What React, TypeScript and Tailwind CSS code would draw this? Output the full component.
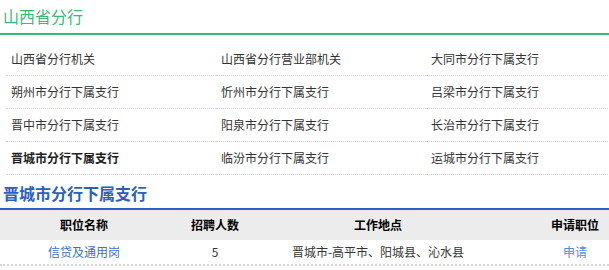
const branches = [
  "山西省分行机关",
  "山西省分行营业部机关",
  "大同市分行下属支行",
  "朔州市分行下属支行",
  "忻州市分行下属支行",
  "吕梁市分行下属支行",
  "晋中市分行下属支行",
  "阳泉市分行下属支行",
  "长治市分行下属支行",
  "晋城市分行下属支行",
  "临汾市分行下属支行",
  "运城市分行下属支行",
];

const active = "晋城市分行下属支行";

const cols = "grid grid-cols-[168px_94px_232px_162px] text-center";

const App = () => {
  return (
    <main className="w-[609px] h-[270px] overflow-hidden bg-white text-[12px] text-[#333] font-['Microsoft_YaHei','Noto_Sans_CJK_SC',sans-serif]">
      <div className="flex flex-col">
        <h2 className="h-[35px] pl-[3px] pt-[6px] text-[16px] leading-[20px] text-[#3cb878] border-b-2 border-[#3cb878]">
          山西省分行
        </h2>

        <div className="grid grid-cols-[210px_210px_210px] ml-[6px] mt-[8px]">
          {branches.map((b) => (
            <div
              key={b}
              className="h-[33px] flex items-center pl-[5px] pb-[1px] border-b border-dotted border-[#cfcfcf]"
            >
              <span className={b === active ? "font-bold text-[#222]" : ""}>{b}</span>
            </div>
          ))}
        </div>

        <h2 className="h-[35px] pl-[3px] pt-[8px] text-[16px] leading-[20px] font-bold text-[#2a60c0] border-b-2 border-[#2a60c0]">
          晋城市分行下属支行
        </h2>

        <div className={cols + " h-[30px] items-center bg-[#ececec] font-bold text-black"}>
          <div>职位名称</div>
          <div>招聘人数</div>
          <div>工作地点</div>
          <div>申请职位</div>
        </div>
        <div className={cols + " h-[26px] items-center border-b-2 border-dotted border-[#d6d6d6]"}>
          <div className="text-[#3b6fd0]">信贷及通用岗</div>
          <div>5</div>
          <div>晋城市-高平市、阳城县、沁水县</div>
          <div className="text-[#5b86e0]">申请</div>
        </div>
      </div>
    </main>
  );
};

export default App;
